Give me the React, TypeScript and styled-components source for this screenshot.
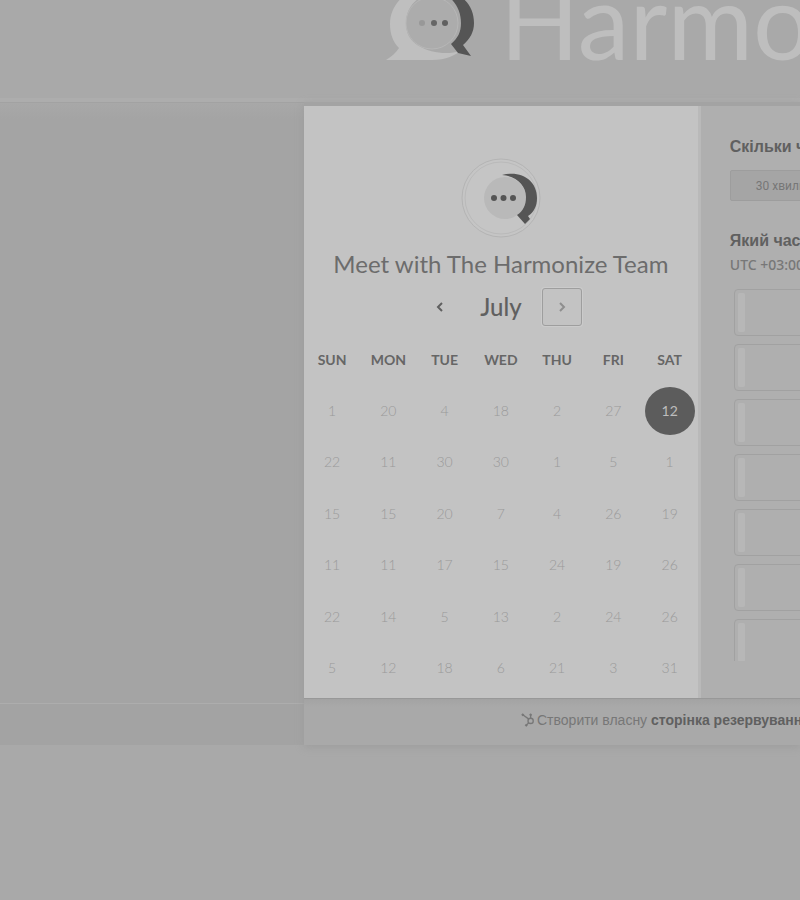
import React from 'react';
import styled, { createGlobalStyle } from 'styled-components';

const GlobalStyle = createGlobalStyle`
  *, *::before, *::after { box-sizing: border-box; }
  body {
    margin: 0;
    background: #a9a9a9;
    color: #666;
    font-family: Lato, "Liberation Sans", sans-serif;
  }
  button { font: inherit; color: inherit; margin: 0; padding: 0; }
`;

const Page = styled.div`
  min-height: 100vh;
  overflow: hidden;
`;

const Header = styled.header`
  display: flex;
  align-items: flex-end;
  gap: 20px;
  height: 98px;
  padding: 0 0 16px 380px;
  overflow: hidden;
  white-space: nowrap;
`;

const BrandMark = styled.svg`
  flex: none;
  width: 100px;
  height: 90px;
  margin-bottom: 12px;
`;

const BrandName = styled.span`
  color: #bebebe;
  font-size: 104px;
  line-height: 124px;
`;

const Main = styled.main`
  display: grid;
  grid-template-columns: 38% minmax(0, 1fr);
  border-top: 4px solid #adadad;
`;

const Side = styled.div`
  display: flex;
  flex-direction: column;
  border-top: 1px solid #a2a2a2;
  background: linear-gradient(#a8a8a8, #a4a4a4 16px);
`;

const SideFoot = styled.div`
  height: 42px;
  margin-top: auto;
  border-top: 1px solid #adadad;
  background: #a3a3a3;
`;

const Widget = styled.div`
  border-top: 4px solid #a3a3a3;
  box-shadow: 0 2px 8px #9d9d9d;
`;

const Booking = styled.div`
  display: grid;
  grid-template-columns: minmax(0, 4fr) minmax(0, 1fr);
  background: #afafaf;
`;

const Calendar = styled.section`
  display: flex;
  flex-direction: column;
  align-items: center;
  padding: 52px 0 4px;
  background: #c3c3c3;
  border-right: 3px solid #b9b9b9;
`;

const Avatar = styled.svg`
  width: 82px;
  height: 80px;
`;

const Title = styled.h1`
  margin: 10px 0 0;
  color: #6c6c6c;
  font-size: 24px;
  font-weight: 400;
  line-height: 32px;
  white-space: nowrap;
`;

const MonthNav = styled.div`
  display: flex;
  align-items: center;
  gap: 20px;
  margin: 8px 0 7px;
`;

const Month = styled.h2`
  margin: 0;
  color: #606060;
  font-size: 24px;
  font-weight: 500;
  line-height: 38px;
`;

const NavButton = styled.button<{ $outlined?: boolean }>`
  display: grid;
  place-items: center;
  width: 40px;
  height: 38px;
  border: 1px solid ${(p) => (p.$outlined ? '#9e9e9e' : 'transparent')};
  border-radius: 3px;
  background: none;
  box-shadow: ${(p) => (p.$outlined ? '0 0 0 1px #cbcbcb' : 'none')};
  color: ${(p) => (p.$outlined ? '#8e8e8e' : '#606060')};
`;

const Chevron = styled.svg`
  width: 8px;
  height: 10px;
  fill: none;
  stroke: currentColor;
  stroke-width: 2;
`;

const Days = styled.table`
  width: 100%;
  height: 361px;
  border-collapse: collapse;
  table-layout: fixed;
`;

const Weekday = styled.th`
  height: 52px;
  padding: 0;
  color: #666;
  font-size: 14px;
  font-weight: 700;
`;

const DayCell = styled.td`
  padding: 0;
  text-align: center;
`;

const Day = styled.button<{ $selected?: boolean }>`
  width: 50px;
  height: 48px;
  border: 0;
  border-radius: 50%;
  background: ${(p) => (p.$selected ? '#5c5c5c' : 'none')};
  color: ${(p) => (p.$selected ? '#bdbdbd' : '#9a9a9a')};
  font-size: 14px;
  font-weight: ${(p) => (p.$selected ? 400 : 300)};
  line-height: 20px;
`;

const Options = styled.section`
  padding: 31px 0 0 29px;
  overflow: hidden;
  white-space: nowrap;
`;

const Question = styled.h3`
  margin: 0;
  color: #606060;
  font: 700 16px/20px "Liberation Sans", sans-serif;
`;

const Duration = styled.button`
  width: 240px;
  height: 31px;
  margin: 13px 0 30px;
  padding-left: 25px;
  border: 1px solid #9d9d9d;
  border-radius: 2px;
  background: #a5a5a5;
  color: #777;
  font: 12px/16px Roboto, sans-serif;
  text-align: left;
`;

const Zone = styled.p`
  margin: 4px 0 14px;
  color: #777;
  font: 500 14px/20px "Noto Sans", sans-serif;
`;

const Slots = styled.div`
  display: flex;
  flex-direction: column;
  gap: 8px;
  height: 372px;
  padding-left: 4px;
  overflow: hidden;
`;

const Slot = styled.button`
  flex: none;
  display: flex;
  width: 240px;
  height: 47px;
  padding: 3px;
  border: 1px solid #a1a1a1;
  border-radius: 4px;
  background: #afafaf;

  &::before {
    content: "";
    width: 7px;
    height: 39px;
    border-radius: 2px;
    background: #b7b7b7;
  }
`;

const Footer = styled.footer`
  display: flex;
  align-items: center;
  height: 47px;
  padding: 0 0 4px 217px;
  border-top: 1px solid #989898;
  background: linear-gradient(#a3a3a3, #a9a9a9 8px);
  color: #777;
  font: 14px/20px "Liberation Sans", sans-serif;
  overflow: hidden;
  white-space: nowrap;
`;

const Sprocket = styled.svg`
  flex: none;
  width: 14px;
  height: 14px;
  margin-right: 2px;
`;

const FooterLink = styled.a`
  color: #606060;
  font-weight: 700;
  text-decoration: none;
`;

const weekdays = ['SUN', 'MON', 'TUE', 'WED', 'THU', 'FRI', 'SAT'];

const weeks = [
  [1, 20, 4, 18, 2, 27, 12],
  [22, 11, 30, 30, 1, 5, 1],
  [15, 15, 20, 7, 4, 26, 19],
  [11, 11, 17, 15, 24, 19, 26],
  [22, 14, 5, 13, 2, 24, 26],
  [5, 12, 18, 6, 21, 3, 31],
];

const slots = [1, 2, 3, 4, 5, 6, 7];

export default function App() {
  return (
    <>
      <GlobalStyle />
      <Page>
        <Header>
          <BrandMark viewBox="380 -20 100 90" aria-hidden="true">
            <path
              d="M432 -13C408 -13 390 3 390 24C390 34 393 42 399 48C396 53 391 57 386 60H432C446 60 456 55 460 51C448 55 430 53 419 46C409 40 406 32 406 23C406 7 417 -5 434 -7Z"
              fill="#bfbfbf"
            />
            <circle cx="432" cy="23" r="26" fill="#acacac" stroke="#b7b7b7" />
            <path
              d="M438 -9C461 -10 474 5 474 23C474 32 470 39 463 45L471 56L458 53L451 44C458 38 461 32 461 23C461 9 453 -4 438 -9Z"
              fill="#555"
            />
            <circle cx="422" cy="23" r="3" fill="#989898" />
            <circle cx="434" cy="23" r="3" fill="#666" />
            <circle cx="445" cy="23" r="3" fill="#606060" />
          </BrandMark>
          <BrandName>Harmonize</BrandName>
        </Header>
        <Main>
          <Side>
            <SideFoot />
          </Side>
          <Widget>
            <Booking>
              <Calendar>
                <Avatar viewBox="460 158 82 80" aria-hidden="true">
                  <circle cx="501" cy="198" r="39" fill="#c5c5c5" stroke="#b4b4b4" />
                  <circle cx="501" cy="198" r="36" fill="none" stroke="#bababa" />
                  <circle cx="505" cy="198" r="21" fill="#b9b9b9" />
                  <path
                    d="M502 175C522 170 537 181 537 198C537 206 534 212 528 216L530 219L525 224L517 215C523 211 526 205 526 197C526 185 516 176 502 175Z"
                    fill="#555"
                  />
                  <circle cx="494" cy="198" r="3" fill="#555" />
                  <circle cx="503.500" cy="198" r="3" fill="#555" />
                  <circle cx="513" cy="198" r="3" fill="#555" />
                </Avatar>
                <Title>Meet with The Harmonize Team</Title>
                <MonthNav>
                  <NavButton aria-label="Previous month">
                    <Chevron viewBox="0 0 8 10">
                      <path d="M6 1L2 5L6 9" />
                    </Chevron>
                  </NavButton>
                  <Month>July</Month>
                  <NavButton $outlined aria-label="Next month">
                    <Chevron viewBox="0 0 8 10">
                      <path d="M2 1L6 5L2 9" />
                    </Chevron>
                  </NavButton>
                </MonthNav>
                <Days>
                  <thead>
                    <tr>
                      {weekdays.map((name) => (
                        <Weekday key={name} scope="col">{name}</Weekday>
                      ))}
                    </tr>
                  </thead>
                  <tbody>
                    {weeks.map((week, row) => (
                      <tr key={row}>
                        {week.map((day, col) => (
                          <DayCell key={col}>
                            <Day $selected={row === 0 && col === 6}>{day}</Day>
                          </DayCell>
                        ))}
                      </tr>
                    ))}
                  </tbody>
                </Days>
              </Calendar>
              <Options>
                <Question>Скільки часу</Question>
                <Duration>30 хвилин</Duration>
                <Question>Який час</Question>
                <Zone>UTC +03:00</Zone>
                <Slots>
                  {slots.map((slot) => (
                    <Slot key={slot} aria-label={`Slot ${slot}`} />
                  ))}
                </Slots>
              </Options>
            </Booking>
            <Footer>
              <Sprocket viewBox="0 0 16 16" fill="none" stroke="#777" aria-hidden="true">
                <circle cx="11" cy="9" r="3" strokeWidth="1.500" />
                <path d="M2 2L9 7M11 6V2M9 11L6 14" strokeWidth="1.500" />
                <circle cx="2" cy="2" r="1" fill="#777" />
                <circle cx="11" cy="2" r="1" fill="#777" />
                <circle cx="6" cy="14" r="1" fill="#777" />
              </Sprocket>
              <span>
                Створити власну <FooterLink href="#create">сторінка резервування</FooterLink>
              </span>
            </Footer>
          </Widget>
        </Main>
      </Page>
    </>
  );
}
